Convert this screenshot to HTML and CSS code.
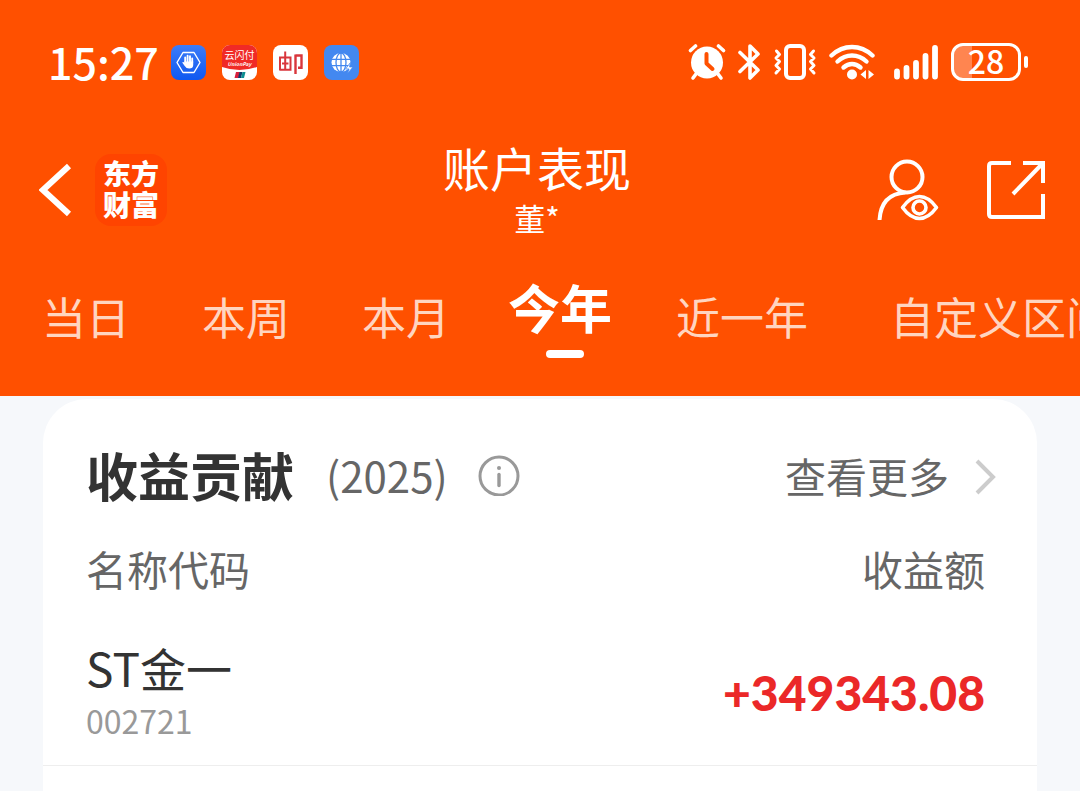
FILE: index.html
```html
<!DOCTYPE html>
<html lang="zh-CN">
<head>
  <meta charset="UTF-8" />
  <title>账户表现</title>
  <meta name="viewport" content="width=device-width, initial-scale=1.0" />
  <link rel="stylesheet" href="styles.css">
</head>
<body>
  <header class="header">
    <div class="status-bar">
      <div class="status-left">
        <span class="clock">15:27</span>
        <svg class="app-icon" viewBox="0 0 35 35">
          <defs>
            <linearGradient id="blue" x1="0" y1="0" x2="0" y2="1">
              <stop offset="0" stop-color="#3d7cf8" />
              <stop offset="1" stop-color="#0f58f0" />
            </linearGradient>
          </defs>
          <rect width="35" height="35" rx="8" fill="url(#blue)" />
          <path d="M12 7.5h11l6 10-6 10H12l-6-10z" fill="none" stroke="#fff" stroke-width="1.4" stroke-linejoin="round" />
          <path d="M14.2 17.5v-5M16.6 17v-6.200M19 17v-5.800M21.200 17.500v-4" stroke="#fff" stroke-width="1.900" stroke-linecap="round" />
          <path d="M13.200 16.500h9v3.500q0 3.500-4 3.500-3 0-4.500-2.500l-2.500-3.600q1-1 2.500.6z" fill="#fff" />
        </svg>
        <svg class="app-icon" viewBox="0 0 35 35">
          <defs>
            <clipPath id="round"><rect width="35" height="35" rx="8" /></clipPath>
          </defs>
          <g clip-path="url(#round)">
            <rect width="35" height="35" fill="#fff" />
            <path d="M0 0h35v22q-17.500 6-35 0z" fill="#f02a26" />
            <text class="union-cn" x="17.500" y="14" text-anchor="middle">云闪付</text>
            <text class="union-en" x="17.500" y="21" text-anchor="middle">UnionPay</text>
            <path d="M14 27h4l-1.500 6h-4z" fill="#d8203c" />
            <path d="M17.500 27h3l-1.500 6h-3z" fill="#123a6b" />
            <path d="M20.500 27h3l-1.500 6h-3z" fill="#0c8f92" />
          </g>
        </svg>
        <svg class="app-icon" viewBox="0 0 35 35">
          <rect width="35" height="35" rx="8" fill="#fff" />
          <g fill="none" stroke="#d9363c" stroke-width="2">
            <path d="M7 11.500v14M7 12.500h10.500v12.200H7M12.200 6.500v18.200M9 18.500h6.500" />
            <path d="M22.500 9.500v19.500M22.500 10.500h6v12.200h-3.500" stroke-width="2.400" />
          </g>
        </svg>
        <svg class="app-icon" viewBox="0 0 35 35">
          <rect width="35" height="35" rx="8" fill="#4388f0" />
          <circle cx="17" cy="17.500" r="9.500" fill="#fff" />
          <g fill="none" stroke="#4388f0" stroke-width="1.300">
            <ellipse cx="17" cy="17.500" rx="5" ry="9.500" />
            <path d="M17 8v19M7 14.300h20M7 20.700h20" />
          </g>
          <path d="M26.500 17.500l-5 6.500h3.500l-1.500 4.500 5.500-6.500h-3.500z" fill="#fff" stroke="#4388f0" stroke-width=".8" />
        </svg>
      </div>
      <div class="status-right">
        <svg width="38" height="38" viewBox="0 0 38 38">
          <g fill="none" stroke="#fff" stroke-linecap="round">
            <path d="M2.500 7.500l5-4.500M35.500 7.500l-5-4.500" stroke-width="3.600" />
            <path d="M8 31l-3 4M30 31l3 4" stroke-width="3.600" />
          </g>
          <circle cx="19" cy="19.500" r="16" fill="#fff" />
          <path d="M18.500 11v9.500l6 5.500" fill="none" stroke="#ff5000" stroke-width="4" stroke-linecap="round" stroke-linejoin="round" />
        </svg>
        <svg width="23" height="38" viewBox="0 0 23 38">
          <path d="M2 9.500l18 17.500-8 8V3l8 8L2 28.500" fill="none" stroke="#fff" stroke-width="3.600" stroke-linecap="round" stroke-linejoin="round" />
        </svg>
        <svg width="44" height="38" viewBox="0 0 44 38">
          <g fill="none" stroke="#fff" stroke-linejoin="round" stroke-linecap="round">
            <rect x="13" y="3" width="18" height="32" rx="4" stroke-width="4" />
            <path d="M3.500 8l3 3.500-3.500 3.500 3.500 3.500-3.500 4 3.500 3.500-3.500 4M40.500 8l-3 3.500 3.500 3.500-3.500 3.500 3.500 4-3.500 3.500 3.500 4" stroke-width="3" />
          </g>
        </svg>
        <svg width="46" height="38" viewBox="0 0 46 38">
          <g fill="none" stroke="#fff" stroke-width="4.400" stroke-linecap="round">
            <path d="M2.500 12.500q9-8.500 20.500-8.500t20.500 8.500" />
            <path d="M8.500 18.500q6.500-6 14.500-6t14.500 6" />
            <path d="M14.500 24.500q4-3.500 8.500-3.500t8.500 3.500" />
          </g>
          <circle cx="23" cy="31.500" r="5" fill="#fff" />
          <path d="M37 27v9l-5.500-4.500zM39.500 27v9l5.500-4.500z" fill="#fff" />
        </svg>
        <svg class="signal" width="45" height="38" viewBox="0 0 45 38">
          <path d="M3 28.500V33.500M12.500 25V33.500M22 20V33.500M31.500 13V33.500M41 5V33.500" stroke="#fff" stroke-width="5.800" stroke-linecap="round" />
        </svg>
        <div class="battery"><span>28</span></div>
      </div>
    </div>

    <div class="nav-bar">
      <div class="nav-left">
        <button class="icon-btn back-btn" aria-label="返回">
          <svg width="34" height="54" viewBox="0 0 34 54">
            <path d="M30 3L4 27l26 24" fill="none" stroke="#fff" stroke-width="6" />
          </svg>
        </button>
        <a class="logo" href="#">东方<br>财富</a>
      </div>
      <div class="nav-title">
        <h1>账户表现</h1>
        <p>董*</p>
      </div>
      <div class="nav-right">
        <button class="icon-btn" aria-label="账户">
          <svg width="62" height="62" viewBox="0 0 62 62">
            <g fill="none" stroke="#fff" stroke-width="4">
              <circle cx="30" cy="18" r="15.500" />
              <path d="M2.500 61q1.500-26 26-27.500" />
              <path d="M25.500 48.500q8-11 17-11t17 11q-8 11-17 11t-17-11z" stroke-width="3.600" stroke-linejoin="round" />
              <circle cx="42.500" cy="48.500" r="6.500" stroke-width="3.600" />
            </g>
          </svg>
        </button>
        <button class="icon-btn" aria-label="分享">
          <svg width="58" height="60" viewBox="0 0 58 60">
            <path d="M24 3H5q-3 0-3 3v48q0 3 3 3h51V34M36 3h20v20M56 3L26 34" fill="none" stroke="#fff" stroke-width="4" />
          </svg>
        </button>
      </div>
    </div>

    <nav class="tabs">
      <button class="tab">当日</button>
      <button class="tab">本周</button>
      <button class="tab">本月</button>
      <button class="tab active">今年</button>
      <button class="tab">近一年</button>
      <button class="tab custom">自定义区间</button>
    </nav>
  </header>

  <main>
    <section class="card">
      <div class="card-head">
        <h2>收益贡献</h2>
        <span class="year">(2025)</span>
        <button class="icon-btn" aria-label="说明">
          <svg width="42" height="42" viewBox="0 0 42 42">
            <circle cx="21" cy="22" r="19" fill="none" stroke="#999" stroke-width="3" />
            <path d="M21 20.500v11" stroke="#999" stroke-width="3.400" stroke-linecap="round" />
            <circle cx="21" cy="14" r="2" fill="#999" />
          </svg>
        </button>
        <a class="more" href="#">查看更多
          <svg width="22" height="40" viewBox="0 0 22 40">
            <path d="M2 6l16 16L2 38" fill="none" stroke="#ccc" stroke-width="4" />
          </svg>
        </a>
      </div>
      <table class="profit-table">
        <thead>
          <tr><th>名称代码</th><th>收益额</th></tr>
        </thead>
        <tbody>
          <tr>
            <td>
              <div class="stock-name">ST金一</div>
              <div class="stock-code">002721</div>
            </td>
            <td class="amount">+349343.08</td>
          </tr>
        </tbody>
      </table>
    </section>
  </main>
</body>
</html>
```

FILE: styles.css
```css
* {
  box-sizing: border-box;
}
body {
  margin: 0;
  min-height: 100vh;
  display: flex;
  flex-direction: column;
  overflow-x: hidden;
  font-family: "Noto Sans CJK SC", sans-serif;
  background-color: #f6f8fb;
  color: #333;
}
h1, h2, p {
  margin: 0;
}
svg {
  display: block;
}
button {
  padding: 0;
  border: none;
  background: none;
  font-family: inherit;
  cursor: pointer;
}
a {
  color: inherit;
  text-decoration: none;
}
.header {
  background-color: #ff5000;
  color: #fff;
}

/* status bar */
.status-bar {
  display: flex;
  justify-content: space-between;
  align-items: center;
  height: 124px;
  padding: 0 52px 0 48px;
}
.status-left {
  display: flex;
  align-items: center;
  gap: 16px;
}
.clock {
  margin-right: -4px;
  padding-bottom: 3px;
  font-size: 43px;
  font-weight: 500;
  line-height: 60px;
}
.app-icon {
  width: 35px;
  height: 35px;
}
.union-cn {
  font-size: 10px;
  fill: #fff;
}
.union-en {
  font-size: 5px;
  font-style: italic;
  font-weight: bold;
  fill: #fff;
}
.status-right {
  display: flex;
  align-items: center;
  gap: 12px;
}
.signal {
  margin-left: 7px;
}
.battery {
  position: relative;
  width: 70px;
  height: 38px;
  margin-right: 7px;
  border: 3px solid #fff;
  border-radius: 12px;
  background: linear-gradient(to right, #ff8550 28%, transparent 28%);
  font-size: 32px;
  font-weight: 500;
  line-height: 28px;
  text-align: center;
}
.battery::after {
  content: "";
  position: absolute;
  right: -10px;
  top: 10px;
  width: 4px;
  height: 12px;
  border-radius: 2px;
  background-color: #fff;
}

/* title bar */
.nav-bar {
  display: grid;
  grid-template-columns: 1fr auto 1fr;
  align-items: center;
  height: 132px;
  padding: 0 35px 0 29px;
}
.nav-left {
  display: flex;
  align-items: center;
  gap: 22px;
}
.back-btn {
  padding-left: 10px;
}
.logo {
  width: 72px;
  height: 72px;
  padding-top: 4px;
  border-radius: 16px;
  background-color: #ff4400;
  font-size: 28px;
  font-weight: 900;
  line-height: 31px;
  text-align: center;
}
.nav-title {
  text-align: center;
}
.nav-title h1 {
  font-size: 47px;
  font-weight: 400;
  line-height: 56px;
}
.nav-title p {
  font-size: 31px;
  line-height: 46px;
}
.nav-right {
  display: flex;
  justify-content: flex-end;
  align-items: center;
  gap: 48px;
}

/* period tabs */
.tabs {
  display: flex;
  gap: 72px;
  height: 140px;
  padding: 28px 0 0 42px;
  overflow: hidden;
}
.tab {
  flex: none;
  height: 64px;
  font-size: 44px;
  line-height: 64px;
  white-space: nowrap;
  color: #ffd5c0;
}
.tab.active {
  display: flex;
  flex-direction: column;
  align-items: center;
  height: 74px;
  margin: 0 -8px 0 -14px;
  font-size: 52px;
  font-weight: bold;
  line-height: 46px;
  color: #fff;
}
.tab.active::after {
  content: "";
  width: 38px;
  height: 8px;
  margin: 20px 0 0 10px;
  border-radius: 4px;
  background-color: #fff;
}
.tab.custom {
  margin-left: 10px;
}

/* profit card */
main {
  flex: 1;
  display: flex;
  padding: 3px 43px 0;
}
.card {
  flex: 1;
  border-radius: 44px 44px 0 0;
  background-color: #fff;
}
.card-head {
  display: flex;
  align-items: center;
  padding: 26px 40px 0 43px;
  line-height: 100px;
}
.card-head h2 {
  font-size: 52px;
  font-weight: bold;
}
.year {
  margin: 0 30px 0 32px;
  font-size: 42px;
  color: #666;
}
.more {
  display: flex;
  align-items: center;
  gap: 26px;
  margin-left: auto;
  font-size: 41px;
  color: #666;
}
.profit-table {
  width: 100%;
  border-collapse: collapse;
}
.profit-table th {
  height: 86px;
  padding: 0 52px 0 43px;
  font-size: 41px;
  font-weight: 400;
  line-height: 60px;
  text-align: left;
  color: #666;
}
.profit-table td {
  padding: 28px 52px 20px 43px;
  border-bottom: 1px solid #eee;
}
.profit-table th:last-child,
.profit-table td:last-child {
  text-align: right;
}
.stock-name {
  font-size: 46px;
  line-height: 56px;
}
.stock-code {
  font-size: 32px;
  line-height: 50px;
  color: #999;
}
.profit-table .amount {
  font-family: Lato, sans-serif;
  font-size: 48px;
  font-weight: 900;
  color: #eb2828;
}
```
